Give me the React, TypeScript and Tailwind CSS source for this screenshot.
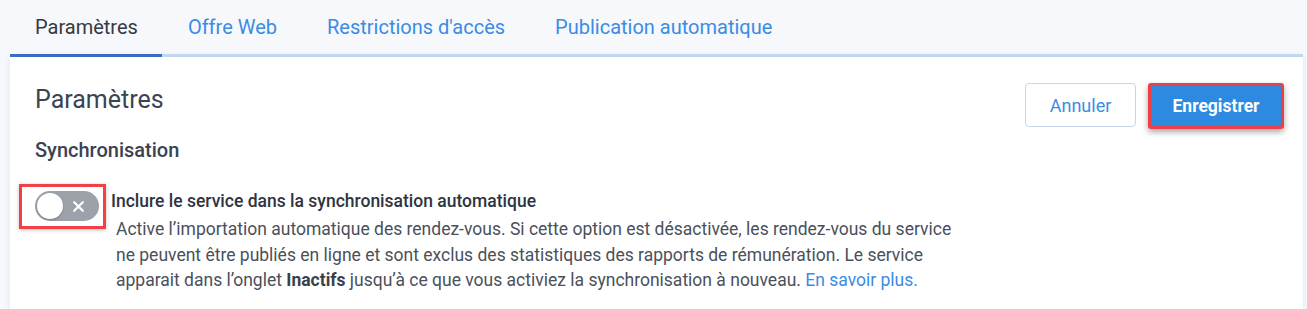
import React from "react";

export default function App() {
  const tabs = ["Paramètres", "Offre Web", "Restrictions d'accès", "Publication automatique"];
  return (
    <div className="w-[1307px] h-[309px] overflow-hidden bg-[#f6f8fc] pl-[10px] pr-[4px] font-['Roboto',sans-serif]">
      <div className="flex h-[54px]">
        {tabs.map((t, i) => (
          <div
            key={t}
            className={
              i === 0
                ? "flex h-full items-center px-[25px] text-[20px] text-[#353a42]"
                : "flex h-full items-center px-[25px] text-[20px] text-[#3a8ce4]"
            }
          >
            {t}
          </div>
        ))}
      </div>
      <div className="flex h-[3px] bg-[#c4daf3]">
        <div className="w-[152px] bg-[#3a6cc4]" />
      </div>
      <div className="h-[252px] bg-white pl-[25px] pr-[19px] pt-[26px] shadow-[0_0_6px_rgba(180,190,215,0.35)]">
        <div className="flex items-start justify-between">
          <div className="flex flex-col">
            <div className="mt-[2px] text-[25px] leading-[29px] text-[#3a4454]">Paramètres</div>
            <div className="mt-[24px] text-[20px] font-medium leading-[24px] text-[#3a4252]">Synchronisation</div>
            <div className="mt-[22px] flex items-start">
              <div className="ml-[-16px] border-[3px] border-[#ef4246] pl-[13px] pr-[4px] pt-[4px] pb-[5px] shadow-[0_1px_4px_rgba(0,0,0,0.25)]">
                <div className="relative flex h-[30px] w-[64px] items-center rounded-full bg-[#9da1a9]">
                  <div className="absolute left-[2px] top-[2px] h-[26px] w-[26px] rounded-full bg-white shadow-[0_1px_2px_rgba(0,0,0,0.25)]" />
                  <svg className="absolute left-[38px] top-[9.5px]" width="11" height="11" viewBox="0 0 11 11">
                    <path d="M1.2 1.2 L9.8 9.8 M9.8 1.2 L1.2 9.8" stroke="white" strokeWidth="2.2" strokeLinecap="round" />
                  </svg>
                </div>
              </div>
              <div className="ml-[5px] mt-[5px] flex flex-col">
                <div className="text-[17.5px] font-medium leading-[24px] text-[#2f3440]">
                  Inclure le service dans la synchronisation automatique
                </div>
                <div className="mt-[4px] pl-[5px] text-[17.5px] leading-[25.5px] text-[#4a505c] whitespace-nowrap">
                  Active l’importation automatique des rendez-vous. Si cette option est désactivée, les rendez-vous du service
                  <br />
                  ne peuvent être publiés en ligne et sont exclus des statistiques des rapports de rémunération. Le service
                  <br />
                  apparait dans l’onglet <span className="font-bold text-[#3a3f4a]">Inactifs</span> jusqu’à ce que vous activiez la synchronisation à nouveau.{" "}
                  <span className="text-[#3a8ce4]">En savoir plus.</span>
                </div>
              </div>
            </div>
          </div>
          <div className="flex items-start gap-[12px]">
            <button className="h-[44px] w-[111px] rounded-[4px] border border-[#c8d4ea] bg-white text-[18px] text-[#3d8be2]">
              Annuler
            </button>
            <button className="h-[46px] w-[136px] rounded-[3px] border-[3px] border-[#ee3f45] bg-[#2e89e0] text-[17.5px] font-bold text-white shadow-[0_3px_6px_rgba(0,0,0,0.35)]">
              Enregistrer
            </button>
          </div>
        </div>
      </div>
    </div>
  );
}
